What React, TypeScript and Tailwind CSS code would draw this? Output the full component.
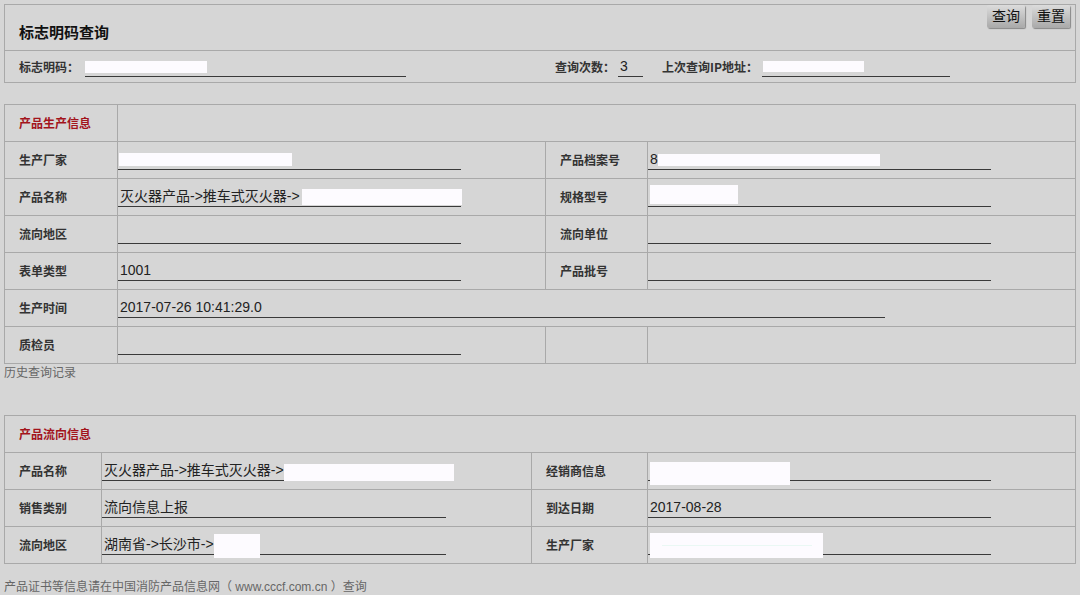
import React from 'react'

const cjk = "font-['Liberation_Sans','Noto_Sans_CJK_SC',sans-serif]"
const cjkFirst = "font-['Noto_Sans_CJK_SC','Liberation_Sans',sans-serif]"

function Redact({ className = '' }: { className?: string }) {
  return <span className={`inline-block shrink-0 bg-[#fdfbff] ${className}`} />
}

function Label({ children, red }: { children?: React.ReactNode; red?: boolean }) {
  return (
    <div
      className={`flex items-center bg-[#d6d6d6] pl-[14px] text-[12px] font-bold ${cjkFirst} ${
        red ? 'text-[#a3141c]' : 'text-[#333]'
      }`}
    >
      {children}
    </div>
  )
}

function Field({
  children,
  width,
  span,
}: {
  children?: React.ReactNode
  width: string
  span?: string
}) {
  return (
    <div className={`flex items-end bg-[#d6d6d6] pb-[8px] ${span ?? ''}`}>
      <div
        className={`flex h-[20px] items-center whitespace-nowrap border-b border-[#3a3a3a] pl-[2px] text-[14px] text-[#222] ${width}`}
      >
        {children}
      </div>
    </div>
  )
}

function Empty({ span }: { span?: string }) {
  return <div className={`bg-[#d6d6d6] ${span ?? ''}`} />
}

export default function App() {
  return (
    <div className={`min-h-[595px] w-[1080px] bg-[#d6d6d6] pt-[4px] ${cjk}`}>
      {/* query box */}
      <div className="mx-[4px] border border-[#a9a9a9]">
        <div className="flex h-[46px] items-start justify-between border-b border-[#a9a9a9] pl-[14px] pr-[5px]">
          <div className={`pt-[17px] text-[15px] font-bold leading-[20px] text-[#111] ${cjkFirst}`}>标志明码查询</div>
          <div className="flex gap-[7px]">
            <button className="h-[23px] w-[38px] rounded-[2px] bg-gradient-to-b from-[#dcdcdc] to-[#a9a9a9] text-[14px] leading-[23px] text-[#111] shadow-[1px_1px_1px_#888]">
              查询
            </button>
            <button className="h-[23px] w-[38px] rounded-[2px] bg-gradient-to-b from-[#dcdcdc] to-[#a9a9a9] text-[14px] leading-[23px] text-[#111] shadow-[1px_1px_1px_#888]">
              重置
            </button>
          </div>
        </div>
        <div className={`flex h-[31px] items-end pb-[5px] pl-[14px] text-[12px] font-bold text-[#333] ${cjkFirst}`}>
          <div className="w-[66px] leading-[20px]">标志明码：</div>
          <div className="flex h-[20px] w-[321px] items-center border-b border-[#3a3a3a]">
            <Redact className="h-[12px] w-[122px]" />
          </div>
          <div className="ml-[149px] w-[63px] leading-[20px]">查询次数：</div>
          <div className={`flex h-[20px] w-[25px] items-center border-b border-[#3a3a3a] pl-[2px] text-[14px] font-normal text-[#222] ${cjk}`}>
            3
          </div>
          <div className="ml-[19px] w-[100px] leading-[20px]">上次查询IP地址：</div>
          <div className="flex h-[20px] w-[188px] items-center border-b border-[#3a3a3a] pl-[1px]">
            <Redact className="h-[11px] w-[101px]" />
          </div>
        </div>
      </div>

      {/* production info */}
      <div className="mx-[4px] mt-[21px] grid auto-rows-[36px] grid-cols-[112px_427px_101px_1fr] gap-px border border-[#a9a9a9] bg-[#a9a9a9]">
        <Label red>产品生产信息</Label>
        <Empty span="col-span-3" />

        <Label>生产厂家</Label>
        <Field width="w-[343px]">
          <Redact className="-ml-[1px] h-[13px] w-[173px]" />
        </Field>
        <Label>产品档案号</Label>
        <Field width="w-[343px]">
          <span>8</span>
          <Redact className="h-[12px] w-[222px]" />
        </Field>

        <Label>产品名称</Label>
        <Field width="w-[343px]">
          灭火器产品-&gt;推车式灭火器-&gt;
          <Redact className="ml-[2px] h-[16px] w-[160px]" />
        </Field>
        <Label>规格型号</Label>
        <Field width="w-[343px]">
          <Redact className="mb-[4px] h-[19px] w-[88px]" />
        </Field>

        <Label>流向地区</Label>
        <Field width="w-[343px]" />
        <Label>流向单位</Label>
        <Field width="w-[343px]" />

        <Label>表单类型</Label>
        <Field width="w-[343px]">1001</Field>
        <Label>产品批号</Label>
        <Field width="w-[343px]" />

        <Label>生产时间</Label>
        <Field width="w-[767px]" span="col-span-3">
          2017-07-26 10:41:29.0
        </Field>

        <Label>质检员</Label>
        <Field width="w-[343px]" />
        <Empty />
        <Empty />
      </div>

      <div className={`ml-[4px] text-[12px] leading-[16px] text-[#666] ${cjkFirst}`}>历史查询记录</div>

      {/* flow info */}
      <div className="mx-[4px] mt-[35px] grid auto-rows-[36px] grid-cols-[96px_429px_115px_1fr] gap-px border border-[#a9a9a9] bg-[#a9a9a9]">
        <div className={`col-span-4 flex items-center bg-[#d6d6d6] pl-[14px] text-[12px] font-bold text-[#a3141c] ${cjkFirst}`}>
          产品流向信息
        </div>

        <Label>产品名称</Label>
        <Field width="w-[344px]">
          灭火器产品-&gt;推车式灭火器-&gt;
          <Redact className="mt-[4px] h-[17px] w-[170px]" />
        </Field>
        <Label>经销商信息</Label>
        <Field width="w-[343px]">
          <Redact className="mt-[6px] h-[23px] w-[140px]" />
        </Field>

        <Label>销售类别</Label>
        <Field width="w-[344px]">流向信息上报</Field>
        <Label>到达日期</Label>
        <Field width="w-[343px]">2017-08-28</Field>

        <Label>流向地区</Label>
        <Field width="w-[344px]">
          湖南省-&gt;长沙市-&gt;
          <Redact className="mt-[2px] h-[24px] w-[46px]" />
        </Field>
        <Label>生产厂家</Label>
        <Field width="w-[343px]">
          <span className="mt-[1px] flex h-[25px] w-[173px] shrink-0 items-center justify-center bg-[#fdfbff]">
            <span className="h-px w-[150px] bg-[#eaf8f4]" />
          </span>
        </Field>
      </div>

      <div className={`ml-[4px] mt-[15px] text-[12px] leading-[16px] text-[#666] ${cjk}`}>
        产品证书等信息请在中国消防产品信息网（ www.cccf.com.cn ）查询
      </div>
    </div>
  )
}
